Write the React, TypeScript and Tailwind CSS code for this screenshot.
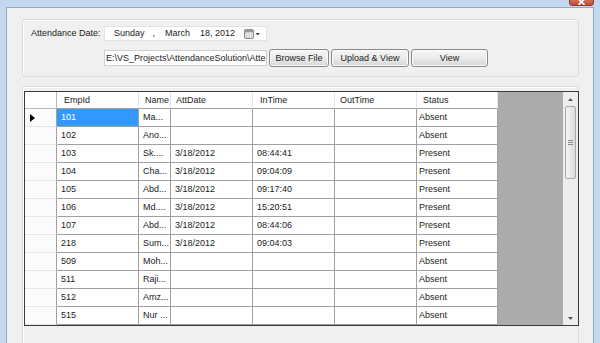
import React from "react";

const rows: string[][] = [
  ["101", "Ma...", "", "", "", "Absent"],
  ["102", "Ano...", "", "", "", "Absent"],
  ["103", "Sk....", "3/18/2012", "08:44:41", "", "Present"],
  ["104", "Cha...", "3/18/2012", "09:04:09", "", "Present"],
  ["105", "Abd...", "3/18/2012", "09:17:40", "", "Present"],
  ["106", "Md....", "3/18/2012", "15:20:51", "", "Present"],
  ["107", "Abd...", "3/18/2012", "08:44:06", "", "Present"],
  ["218", "Sum...", "3/18/2012", "09:04:03", "", "Present"],
  ["509", "Moh...", "", "", "", "Absent"],
  ["511", "Raji...", "", "", "", "Absent"],
  ["512", "Amz...", "", "", "", "Absent"],
  ["515", "Nur ...", "", "", "", "Absent"],
];

const widths = ["w-[82px]", "w-[32px]", "w-[82px]", "w-[82px]", "w-[82px]", "w-[81px]"];
const headers = ["EmpId", "Name", "AttDate", "InTime", "OutTime", "Status"];
const headerPad = ["pl-[7px]", "pl-[6px]", "pl-[5px]", "pl-[7px]", "pl-[5px]", "pl-[6px]"];

function Btn({ w, children }: { w: string; children: React.ReactNode }) {
  return (
    <div
      className={`${w} h-[18px] flex items-center justify-center rounded-[3px] border border-[#8a8a8a] bg-linear-to-b from-[#f6f6f6] via-[#ebebeb] to-[#d6d6d6] text-[#1a1a1a] shadow-[inset_0_0_0_1px_#fbfbfb] whitespace-nowrap`}
    >
      {children}
    </div>
  );
}

function CalendarIcon() {
  return (
    <svg width="17" height="10" viewBox="0 0 17 10">
      <rect x="0.5" y="0.5" width="9" height="9" rx="1" fill="#c9c9c9" stroke="#8c8c8c" />
      <rect x="1" y="1" width="8" height="2" fill="#9a9a9a" />
      <line x1="1" y1="5" x2="9" y2="5" stroke="#e8e8e8" />
      <line x1="1" y1="7" x2="9" y2="7" stroke="#e8e8e8" />
      <line x1="4" y1="3" x2="4" y2="9" stroke="#e8e8e8" />
      <line x1="6.5" y1="3" x2="6.5" y2="9" stroke="#e8e8e8" />
      <path d="M11.5 4 L16 4 L13.75 6.5 Z" fill="#4a4a4a" />
    </svg>
  );
}

export default function App() {
  return (
    <div
      className="w-[600px] h-[343px] bg-[#c3d7ee] overflow-hidden relative text-[9px] leading-none text-[#111]"
      style={{ fontFamily: '"Liberation Sans", Arial, sans-serif' }}
    >
      {/* close button */}
      <div className="absolute left-[569px] top-[-6px] w-[25px] h-[12px] rounded-[3px] border border-[#8d3a2e] bg-linear-to-b from-[#e3917f] to-[#c24a33] flex items-end justify-center">
        <svg width="7" height="6" viewBox="0 0 7 6">
          <path d="M0.5 0 L6.5 6 M6.5 0 L0.5 6" stroke="#fff" strokeWidth="1.6" />
        </svg>
      </div>

      <div className="ml-[6px] mt-[7px] w-[588px] h-[336px] border-l border-t border-r border-[#94a8c2]">
        <div className="w-full h-full bg-[#f0f0f0] flex flex-col overflow-hidden">
          {/* group 1 */}
          <div className="shrink-0 ml-[15px] mt-[11px] w-[557px] h-[58px] border border-[#dcdcdc] rounded-[3px] shadow-[inset_1px_1px_0_#ffffff] pt-[6px] pl-[8px] flex flex-col">
            <div className="flex items-center h-[15px]">
              <div className="w-[73px] text-[#222] whitespace-nowrap">Attendance Date:</div>
              <div className="w-[163px] h-[15px] bg-white border border-[#e2e2e2] flex items-center text-[#222] whitespace-nowrap">
                <span className="ml-[9px]">Sunday</span>
                <span className="ml-[8px]">,</span>
                <span className="ml-[10px]">March</span>
                <span className="ml-[10px]">18, 2012</span>
                <span className="ml-[9px] flex items-center">
                  <CalendarIcon />
                </span>
              </div>
            </div>
            <div className="flex items-center h-[18px] mt-[8px] ml-[73px]">
              <div className="w-[163px] h-[16px] bg-white border border-[#cfcfcf] flex items-center pl-[1px] whitespace-nowrap overflow-hidden text-[#222]">
                E:\VS_Projects\AttendanceSolution\Atte
              </div>
              <div className="ml-[2px]">
                <Btn w="w-[60px]">Browse File</Btn>
              </div>
              <div className="ml-[2px]">
                <Btn w="w-[78px]">Upload &amp; View</Btn>
              </div>
              <div className="ml-[2px]">
                <Btn w="w-[77px]">View</Btn>
              </div>
            </div>
          </div>

          {/* group 2 */}
          <div className="shrink-0 ml-[15px] mt-[9px] w-[557px] h-[270px] border border-[#dcdcdc] rounded-[3px] shadow-[inset_1px_1px_0_#ffffff] pt-[4px] pl-[1px]">
            <div className="w-[555px] h-[235px] border border-[#3a3a3a] flex bg-[#ababab]">
              <div className="flex-1 flex flex-col">
                {/* header */}
                <div className="flex h-[17px]">
                  <div className="w-[32px] h-full bg-white border-r border-b border-[#b8b8b8]" />
                  {headers.map((h, i) => (
                    <div
                      key={h}
                      className={`${widths[i]} h-full bg-white border-r border-[#e4e4e4] border-b border-b-[#a0a0a0] flex items-center ${headerPad[i]} text-[#222]`}
                    >
                      {h}
                    </div>
                  ))}
                </div>
                {rows.map((r, ri) => (
                  <div key={ri} className="flex h-[18px]">
                    <div className="w-[32px] h-full bg-[#fbfbfb] border-r border-[#a0a0a0] border-b border-b-[#e6e6e6] flex items-center pl-[5px]">
                      {ri === 0 && (
                        <svg width="5" height="8" viewBox="0 0 5 8">
                          <path d="M0 0 L5 4 L0 8 Z" fill="#000" />
                        </svg>
                      )}
                    </div>
                    {r.map((c, ci) => {
                      const sel = ri === 0 && ci === 0;
                      return (
                        <div
                          key={ci}
                          className={`${widths[ci]} h-full border-r border-b border-[#a0a0a0] flex items-center ${ci === 5 ? "pl-[2px]" : "pl-[4px]"} whitespace-nowrap overflow-hidden ${sel ? "bg-[#3399ff] text-white" : "bg-white text-[#222]"}`}
                        >
                          {c}
                        </div>
                      );
                    })}
                  </div>
                ))}
              </div>
              {/* scrollbar */}
              <div className="w-[15px] h-full bg-[#ededed] flex flex-col items-center">
                <div className="h-[14px] w-full flex items-center justify-center">
                  <svg width="5" height="3" viewBox="0 0 5 3">
                    <path d="M0 3 L2.5 0 L5 3 Z" fill="#555" />
                  </svg>
                </div>
                <div className="w-[11px] h-[73px] rounded-[2px] border border-[#a8a8a8] bg-linear-to-r from-[#f4f4f4] via-[#e8e8e8] to-[#dadada] flex flex-col items-center justify-center gap-[1px]">
                  <div className="w-[5px] h-[1px] bg-[#8a8a8a]" />
                  <div className="w-[5px] h-[1px] bg-[#8a8a8a]" />
                  <div className="w-[5px] h-[1px] bg-[#8a8a8a]" />
                </div>
                <div className="flex-1" />
                <div className="h-[14px] w-full flex items-center justify-center">
                  <svg width="5" height="3" viewBox="0 0 5 3">
                    <path d="M0 0 L2.5 3 L5 0 Z" fill="#555" />
                  </svg>
                </div>
              </div>
            </div>
          </div>
        </div>
      </div>
    </div>
  );
}
